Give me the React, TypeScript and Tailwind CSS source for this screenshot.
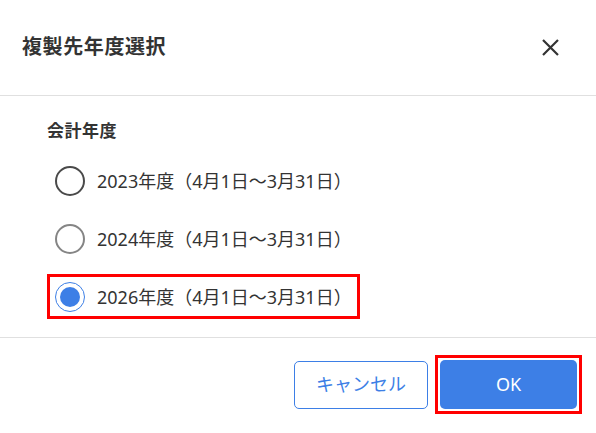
import React, { useState } from 'react';

const years = [2023, 2024, 2026];

const App: React.FC = () => {
  const [selected, setSelected] = useState(2026);

  return (
    <div className="w-[596px] h-[433px] bg-white flex flex-col text-[#333] font-['Noto_Sans','Noto_Sans_CJK_JP',sans-serif]">
      <div className="h-[96px] shrink-0 flex items-center justify-between pl-[22px] pr-[37px] border-b border-[#e0e0e0]">
        <h2 className="text-[20px] font-bold leading-none tracking-[0.6px] pb-[2px]">複製先年度選択</h2>
        <button className="w-[17px] h-[17px] mb-[1px]">
          <svg viewBox="0 0 17 17" className="w-[17px] h-[17px]" stroke="#333" strokeWidth="2.2" strokeLinecap="butt">
            <path d="M1 1L16 16M16 1L1 16" />
          </svg>
        </button>
      </div>

      <div className="flex-1 pl-[47px] pt-[25px]">
        <div className="text-[17px] font-bold leading-[20px] tracking-[0.5px]">会計年度</div>
        <div className="flex flex-col gap-[13px] mt-[17px]">
          {years.map((y) => {
            const isSel = y === selected;
            return (
              <label
                key={y}
                onClick={() => setSelected(y)}
                className={`w-fit h-[45px] flex items-center gap-[12px] pl-[5px] pr-[5px] border-[3px] cursor-pointer ${isSel ? 'border-[#ff0000]' : 'border-transparent'}`}
              >
                {isSel ? (
                  <span className="w-[30px] h-[30px] rounded-full border-[1.5px] border-[#3d7fe6] flex items-center justify-center">
                    <span className="w-[20px] h-[20px] rounded-full bg-[#3d7fe6]" />
                  </span>
                ) : (
                  <span className={`w-[30px] h-[30px] rounded-full border-2 ${y === 2023 ? 'border-[#4a4a4a]' : 'border-[#858585]'}`} />
                )}
                <span className="text-[18px] leading-none">{y}年度（4月1日〜3月31日）</span>
              </label>
            );
          })}
        </div>
      </div>

      <div className="h-[96px] shrink-0 border-t border-[#e0e0e0] flex items-center justify-end gap-[7px] pr-[14px] pb-[2px]">
        <button className="w-[134px] h-[48px] rounded-[5px] border border-[#3d7fe6] text-[#3d7fe6] text-[18px] bg-white">
          キャンセル
        </button>
        <div className="border-[3px] border-[#ff0000] p-[2px]">
          <button className="w-[137px] h-[49px] rounded-[5px] bg-[#3d7fe6] text-white text-[18px] block">
            OK
          </button>
        </div>
      </div>
    </div>
  );
};

export default App;
